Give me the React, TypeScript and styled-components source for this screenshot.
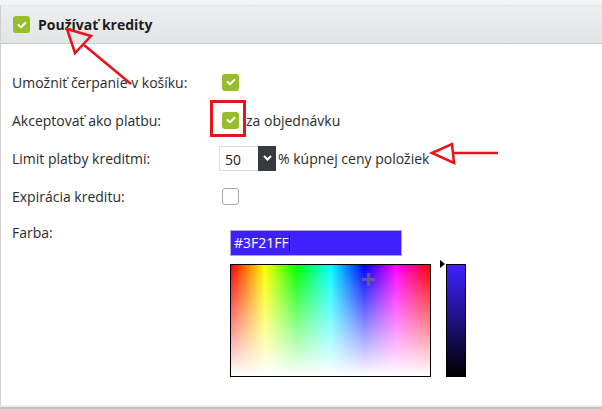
import styled, { createGlobalStyle } from "styled-components";

const GlobalStyle = createGlobalStyle`
  html, body {
    margin: 0;
    padding: 0;
    background: #f4f4f4;
  }
  body {
    font-family: "Open Sans", "DejaVu Sans", sans-serif;
    color: #333;
    width: 602px;
    height: 409px;
    overflow: hidden;
  }
`;

function Check({ checked }: { checked: boolean }) {
  return (
    <CheckBox $checked={checked}>
      {checked && (
        <svg width="10" height="8" viewBox="0 0 10 8">
          <path d="M1.5 4 L4 6.3 L8.5 1.8" fill="none" stroke="#fff" strokeWidth="2" strokeLinecap="round" strokeLinejoin="round" />
        </svg>
      )}
    </CheckBox>
  );
}

function App() {
  return (
    <Page>
      <GlobalStyle />
      <Panel>
        <Header>
          <Check checked />
          <Title>Používať kredity</Title>
        </Header>
        <Body>
          <Row>
            <Label>Umožniť čerpanie v košíku:</Label>
            <Control $indent={3}>
              <Check checked />
            </Control>
          </Row>
          <Row>
            <Label>Akceptovať ako platbu:</Label>
            <Control $indent={3}>
              <Check checked />
              <Suffix $gap={7}>za objednávku</Suffix>
            </Control>
          </Row>
          <Row>
            <Label>Limit platby kreditmi:</Label>
            <Control $indent={0}>
              <Select>
                <SelectValue>50</SelectValue>
                <SelectButton>
                  <svg width="9" height="6" viewBox="0 0 9 6">
                    <path d="M1 1 L4.5 4.5 L8 1" fill="none" stroke="#fff" strokeWidth="2" />
                  </svg>
                </SelectButton>
              </Select>
              <Suffix $gap={2}>% kúpnej ceny položiek</Suffix>
            </Control>
          </Row>
          <Row>
            <Label>Expirácia kreditu:</Label>
            <Control $indent={3}>
              <Check checked={false} />
            </Control>
          </Row>
          <ColorRow>
            <Label>Farba:</Label>
            <ColorBlock>
              <HexInput>
                #3F21FF<Caret />
              </HexInput>
              <Picker>
                <Spectrum>
                  <Cross width="13" height="13" viewBox="0 0 13 13">
                    <path d="M6.5 0 V13 M0 6.5 H13" stroke="rgba(110,110,110,0.75)" strokeWidth="3" />
                  </Cross>
                </Spectrum>
                <SliderWrap>
                  <Pointer />
                  <Slider />
                </SliderWrap>
              </Picker>
            </ColorBlock>
          </ColorRow>
        </Body>
      </Panel>
      <Footer />
      <Marks width="602" height="409" viewBox="0 0 602 409">
        <g fill="none" stroke="#e8141b" strokeWidth="2.5" strokeLinejoin="miter">
          <path d="M67 29 L91 36 L75 53 Z" />
          <path d="M84 45 L131 84" />
          <rect x="211.5" y="101.5" width="33" height="34" strokeWidth="3" />
          <path d="M432 153 L452 144 L454 163 Z" />
          <path d="M452 153 L498 153" />
        </g>
      </Marks>
    </Page>
  );
}

export default App;

const Page = styled.div`
  position: relative;
  width: 602px;
  height: 409px;
  display: flex;
  flex-direction: column;
  padding-top: 5px;
  box-sizing: border-box;
`;

const Panel = styled.div`
  flex: 1;
  background: #fff;
  border-left: 1px solid #cfcfcf;
  border-top: 1px solid #e4e4e4;
  border-bottom: 2px solid #ececec;
`;

const Footer = styled.div`
  height: 2px;
  background: #c2c2c2;
`;

const Header = styled.div`
  height: 37px;
  display: flex;
  align-items: center;
  gap: 8px;
  padding-left: 12px;
  background: linear-gradient(#eceeef, #e2e4e5);
  border-bottom: 1px solid #c9cbcc;
`;

const Title = styled.span`
  font-size: 14px;
  font-weight: 700;
  color: #1d1d1d;
`;

const CheckBox = styled.span<{ $checked: boolean }>`
  width: 17px;
  height: 17px;
  box-sizing: border-box;
  border-radius: 3px;
  display: inline-flex;
  align-items: center;
  justify-content: center;
  flex: none;
  background: ${(p) => (p.$checked ? "#96bd2c" : "#fff")};
  border: ${(p) => (p.$checked ? "none" : "1.5px solid #a9a9a9")};
`;

const Body = styled.div`
  padding: 19px 0 0 11px;
`;

const Row = styled.div`
  display: grid;
  grid-template-columns: 207px 1fr;
  align-items: center;
  height: 38px;
`;

const Label = styled.div`
  font-size: 14px;
  line-height: 19px;
  color: #2b2b2b;
`;

const Control = styled.div<{ $indent: number }>`
  display: flex;
  align-items: center;
  padding-left: ${(p) => p.$indent}px;
`;

const Suffix = styled.span<{ $gap: number }>`
  margin-left: ${(p) => p.$gap}px;
  font-size: 14px;
  color: #2b2b2b;
`;

const Select = styled.div`
  display: flex;
  height: 25px;
`;

const SelectValue = styled.div`
  width: 39px;
  box-sizing: border-box;
  border: 1px solid #dcdcdc;
  border-right: none;
  padding: 3px 0 0 5px;
  font-size: 14px;
  color: #222;
`;

const SelectButton = styled.div`
  width: 18px;
  background: #353b3f;
  display: flex;
  align-items: center;
  justify-content: center;
`;

const ColorRow = styled.div`
  display: grid;
  grid-template-columns: 207px 1fr;
  align-items: start;
  padding-top: 8px;
`;

const ColorBlock = styled.div`
  margin-left: 11px;
  margin-top: 7px;
  display: flex;
  flex-direction: column;
  gap: 8px;
`;

const HexInput = styled.div`
  width: 172px;
  height: 26px;
  box-sizing: border-box;
  background: #3f21ff;
  border: 1px solid #aaa3e6;
  color: #fff;
  font-size: 14px;
  line-height: 24px;
  padding-left: 3px;
  display: flex;
  align-items: center;
`;

const Caret = styled.span`
  width: 1px;
  height: 16px;
  background: #111;
`;

const Picker = styled.div`
  display: flex;
  align-items: flex-start;
  gap: 15px;
`;

const Spectrum = styled.div`
  position: relative;
  width: 201px;
  height: 113px;
  box-sizing: border-box;
  border: 1px solid #000;
  background:
    linear-gradient(rgba(255, 255, 255, 0), #fff),
    linear-gradient(to right, #f00, #ff0 17%, #0f0 33%, #0ff 50%, #00f 67%, #f0f 83%, #f00);
`;

const Cross = styled.svg`
  position: absolute;
  left: 131px;
  top: 8px;
`;

const SliderWrap = styled.div`
  position: relative;
`;

const Pointer = styled.span`
  position: absolute;
  left: -6px;
  top: -4px;
  width: 0;
  height: 0;
  border-top: 4px solid transparent;
  border-bottom: 4px solid transparent;
  border-left: 5px solid #000;
`;

const Slider = styled.div`
  width: 20px;
  height: 113px;
  box-sizing: border-box;
  border: 1px solid #000;
  background: linear-gradient(#3f21ff, #000);
`;

const Marks = styled.svg`
  position: absolute;
  left: 0;
  top: 0;
  pointer-events: none;
`;
